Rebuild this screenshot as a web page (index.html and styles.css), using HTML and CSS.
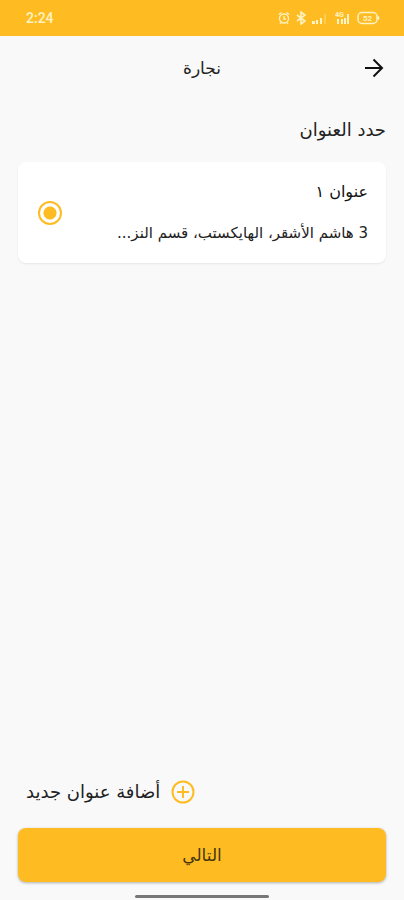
FILE: index.html
```html
<!DOCTYPE html>
<html lang="ar" dir="rtl">
<head>
    <meta charset="UTF-8">
    <meta name="viewport" content="width=device-width, initial-scale=1.0">
    <title>نجارة</title>
    <link rel="stylesheet" href="styles.css">
</head>
<body>
    <div class="status-bar" dir="ltr">
        <span class="clock">2:24</span>
        <div class="status-icons">
            <svg width="12" height="14" viewBox="0 0 12 14" fill="none" stroke="currentColor" stroke-width="1.3">
                <circle cx="6" cy="7.5" r="4.5"/>
                <path d="M6 5v3h2M1 3.5L3.5 1.5M11 3.5L8.5 1.5M3 11.5L2 13M9 11.5l1 1.5"/>
            </svg>
            <svg width="10" height="14" viewBox="0 0 10 14" fill="none" stroke="currentColor" stroke-width="1.6">
                <path d="M1 4l8 6-4 3V1l4 3-8 6"/>
            </svg>
            <svg width="17" height="14" viewBox="0 0 17 14" fill="currentColor">
                <path d="M0 10h3v3H0zM4 9h2v4H4zM8 7h2v6H8z"/>
                <path d="M12 3h2v10h-2z" opacity=".3"/>
            </svg>
            <svg width="16" height="14" viewBox="0 0 16 14" fill="currentColor">
                <text x="0" y="6" font-size="7" font-weight="bold">4G</text>
                <path d="M2 8h2v5H2zM6 8h2v5H6zM9 7h2v6H9zM12 3h2v10h-2z"/>
            </svg>
            <svg width="23" height="14" viewBox="0 0 23 14" fill="currentColor">
                <rect x="1" y="1.5" width="19" height="11" rx="4" fill="none" stroke="currentColor" stroke-width="1.5"/>
                <path d="M20.5 4.5c2.5 1 2.5 4 0 5z"/>
                <text x="6" y="10" font-size="8" font-weight="bold">52</text>
            </svg>
        </div>
    </div>

    <header class="app-bar">
        <button class="back-btn" type="button" aria-label="رجوع">
            <svg width="20" height="20" viewBox="0 0 20 20" fill="none" stroke="currentColor" stroke-width="2">
                <path d="M1 10h17M9.5 1.5L18 10l-8.5 8.5"/>
            </svg>
        </button>
        <h1>نجارة</h1>
    </header>

    <main class="content">
        <h2>حدد العنوان</h2>
        <label class="address-card">
            <span class="address-text">
                <span class="address-name">عنوان ١</span>
                <span class="address-line">3 هاشم الأشقر، الهايكستب، قسم النز...</span>
            </span>
            <input class="address-radio" type="radio" name="address" checked>
        </label>
    </main>

    <footer class="actions">
        <button class="add-btn" type="button">
            <svg width="24" height="24" viewBox="0 0 24 24" fill="none" stroke="currentColor" stroke-width="2">
                <circle cx="12" cy="12" r="10.5"/>
                <path d="M12 6v12M6 12h12"/>
            </svg>
            <span>أضافة عنوان جديد</span>
        </button>
        <button class="next-btn" type="button">التالي</button>
    </footer>
    <div class="home-bar"></div>
</body>
</html>
```
FILE: styles.css
```css
* {
    margin: 0;
    padding: 0;
    box-sizing: border-box;
}

:root {
    --primary-color: #ffbc22;
    --text-color: #222;
    --bg-color: #f9f9f9;
}

body {
    min-height: 100vh;
    display: flex;
    flex-direction: column;
    background-color: var(--bg-color);
    color: var(--text-color);
    font-family: "DejaVu Sans", sans-serif;
}

button {
    border: none;
    background: none;
    color: inherit;
    font-family: inherit;
    cursor: pointer;
}

svg {
    display: block;
}

.status-bar {
    height: 36px;
    padding: 0 24px 0 26px;
    display: flex;
    align-items: center;
    justify-content: space-between;
    background-color: var(--primary-color);
    color: #fff3c4;
    font-family: Roboto, sans-serif;
}

.clock {
    font-size: 14px;
    font-weight: 500;
}

.status-icons {
    display: flex;
    gap: 6px;
}

.app-bar {
    height: 64px;
    padding: 0 20px;
    display: grid;
    grid-template-columns: 20px 1fr 20px;
    align-items: center;
}

.back-btn {
    color: #111;
}

h1 {
    font-size: 17px;
    font-weight: normal;
    text-align: center;
}

.content {
    flex: 1;
    padding: 20px 18px;
}

h2 {
    font-size: 18px;
    font-weight: normal;
    line-height: 20px;
}

.address-card {
    margin-top: 22px;
    padding: 18px;
    display: flex;
    align-items: center;
    justify-content: space-between;
    border-radius: 8px;
    background-color: #fff;
    box-shadow: 0 1px 2px rgba(0, 0, 0, 0.08);
}

.address-text {
    display: flex;
    flex-direction: column;
    gap: 17px;
}

.address-name {
    color: #111;
    font-size: 16px;
    line-height: 24px;
}

.address-line {
    font-size: 15px;
    line-height: 24px;
    white-space: nowrap;
}

.address-radio {
    appearance: none;
    flex: none;
    width: 24px;
    height: 24px;
    margin-left: 2px;
    border: 2px solid var(--primary-color);
    border-radius: 50%;
    background: radial-gradient(circle, var(--primary-color) 6px, transparent 7px);
}

.actions {
    padding: 0 18px;
    display: flex;
    flex-direction: column;
    gap: 20px;
}

.add-btn {
    align-self: flex-end;
    padding: 4px 8px;
    display: flex;
    align-items: center;
    gap: 11px;
    font-size: 18px;
    line-height: 24px;
}

.add-btn svg {
    color: var(--primary-color);
}

.next-btn {
    height: 54px;
    border-radius: 8px;
    background-color: var(--primary-color);
    box-shadow: 0 1px 3px rgba(0, 0, 0, 0.3);
    color: #47360d;
    font-size: 17px;
}

.home-bar {
    width: 134px;
    height: 3px;
    margin: 13px auto 2px;
    border-radius: 2px;
    background-color: #777;
}
```
